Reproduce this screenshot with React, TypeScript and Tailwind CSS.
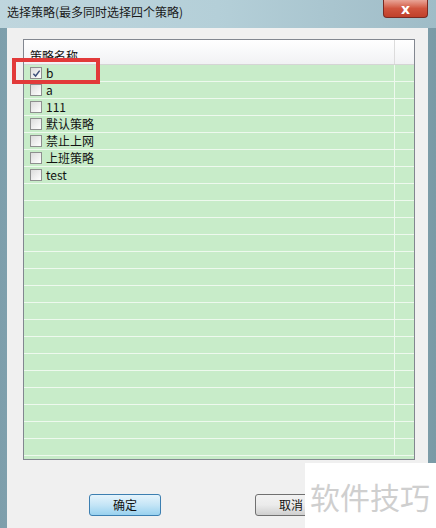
import React from "react";

const rows = ["b", "a", "111", "默认策略", "禁止上网", "上班策略", "test"];
const filler = Array.from({ length: 16 });

function Check({ checked }: { checked?: boolean }) {
  return (
    <span className="relative flex h-[12px] w-[12px] shrink-0 items-center justify-center border border-[#8e8f8f] bg-gradient-to-br from-[#dcdcdc] to-[#ffffff]">
      {checked && (
        <svg viewBox="0 0 10 10" className="h-[9px] w-[9px]">
          <path d="M1.5 5.2 L4 7.8 L8.5 1.8" fill="none" stroke="#3d4f7a" strokeWidth="1.6" />
        </svg>
      )}
    </span>
  );
}

export default function App() {
  const font = { fontFamily: '"Noto Sans CJK SC", "Liberation Sans", sans-serif' };
  return (
    <div
      className="relative flex h-[528px] w-[436px] flex-col overflow-hidden bg-gradient-to-r from-[#7d9eab] via-[#a9c6d1] to-[#7a9aa6] text-[12px] text-[#111]"
      style={font}
    >
      {/* title bar */}
      <div className="relative flex h-[28px] shrink-0 items-start bg-gradient-to-r from-[#bfd6de] via-[#b4cfd8] to-[#9fbcc7]">
        <span className="pl-[7px] pt-[5px] text-[12px] leading-[14px] text-[#1a1a1a]">选择策略(最多同时选择四个策略)</span>
        <div className="absolute left-[383px] top-0 flex h-[18px] w-[45px] items-center justify-center rounded-b-[4px] border border-t-0 border-[#7a2a22] bg-gradient-to-b from-[#e8a497] via-[#d0543e] to-[#c0402a]">
          <span className="text-[14px] font-bold leading-none text-white" style={{ fontFamily: '"DejaVu Sans", sans-serif' }}>x</span>
        </div>
      </div>

      {/* client */}
      <div className="ml-[7px] mr-[8px] flex flex-1 flex-col bg-[#f0f0f0]">
        <div className="ml-[16px] mt-[11px] flex h-[421px] w-[392px] flex-col border border-[#828790] bg-[#c8ecc9]">
          <div className="flex h-[25px] shrink-0 border-b border-[#d5d5d5] bg-gradient-to-b from-[#ffffff] to-[#f1f2f4]">
            <div className="flex w-[371px] items-end border-r border-[#dcdcdc] pb-[1px] pl-[6px] text-[12px] leading-[14px]">策略名称</div>
            <div className="flex-1" />
          </div>
          <div className="flex flex-1 flex-col overflow-hidden">
            {rows.map((r, i) => (
              <div key={r} className="flex h-[17px] shrink-0 border-b border-[#eef9ee]">
                <div className="flex w-[371px] items-center gap-[4px] border-r border-[#eef9ee] pl-[6px]">
                  <Check checked={i === 0} />
                  <span className="leading-[14px]">{r}</span>
                </div>
              </div>
            ))}
            {filler.map((_, i) => (
              <div key={i} className="flex h-[17px] shrink-0 border-b border-[#eef9ee]">
                <div className="w-[371px] border-r border-[#eef9ee]" />
              </div>
            ))}
          </div>
        </div>

        <div className="mt-[34px] flex">
          <button className="ml-[82px] flex h-[22px] w-[72px] items-center justify-center rounded-[3px] border border-[#3c7fb1] bg-gradient-to-b from-[#e5f4fc] via-[#c4e5f6] to-[#98d1ef] text-[12px] text-[#111]">
            确定
          </button>
          <button className="ml-[94px] flex h-[22px] w-[72px] items-center justify-center rounded-[3px] border border-[#707070] bg-gradient-to-b from-[#f2f2f2] via-[#ebebeb] to-[#cfcfcf] text-[12px] text-[#111]">
            取消
          </button>
        </div>
      </div>

      {/* annotation */}
      <div className="absolute left-[12px] top-[58px] h-[26px] w-[88px] border-[4px] border-[#e23a3a]" />

      {/* watermark */}
      <div className="absolute left-[305px] top-[463px] flex h-[65px] w-[131px] items-center bg-white pl-[5px]">
        <span className="text-[30px] leading-none text-[#cfcfcf]">软件技巧</span>
      </div>
    </div>
  );
}
